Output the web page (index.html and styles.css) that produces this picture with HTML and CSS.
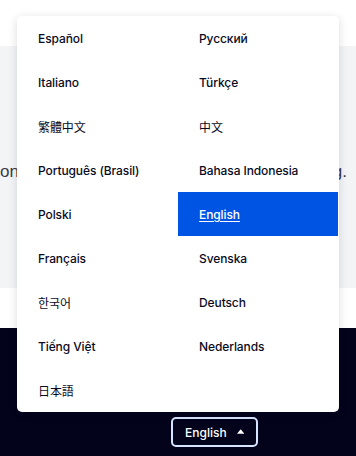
FILE: index.html
```html
<!DOCTYPE html>
<html lang="en">
<head>
<meta charset="utf-8">
<title>Language picker</title>
<link rel="stylesheet" href="styles.css">
</head>
<body>
<div class="top"></div>
<section class="band">
  <p class="notice"><span>on</span><span>g.</span></p>
</section>
<div class="gap"></div>
<footer class="footer">
  <div class="picker">
    <ul class="menu">
      <li class="item"><a href="#">Español</a></li>
      <li class="item"><a href="#">Русский</a></li>
      <li class="item"><a href="#">Italiano</a></li>
      <li class="item"><a href="#">Türkçe</a></li>
      <li class="item cjk"><a href="#" lang="zh-Hant">繁體中文</a></li>
      <li class="item cjk"><a href="#" lang="zh-Hans">中文</a></li>
      <li class="item"><a href="#">Português (Brasil)</a></li>
      <li class="item"><a href="#">Bahasa Indonesia</a></li>
      <li class="item"><a href="#">Polski</a></li>
      <li class="item active"><a href="#">English</a></li>
      <li class="item"><a href="#">Français</a></li>
      <li class="item"><a href="#">Svenska</a></li>
      <li class="item cjk"><a href="#" lang="ko">한국어</a></li>
      <li class="item"><a href="#">Deutsch</a></li>
      <li class="item"><a href="#">Tiếng Việt</a></li>
      <li class="item"><a href="#">Nederlands</a></li>
      <li class="item cjk"><a href="#" lang="ja">日本語</a></li>
    </ul>
    <button class="toggle" type="button">English <svg class="caret" width="8" height="5" viewBox="0 0 8 5"><path d="M0 5 L4 0 L8 5 Z" fill="#fff"/></svg></button>
  </div>
</footer>
</body>
</html>
```

FILE: styles.css
```css
* { box-sizing: border-box; }
html, body { margin: 0; padding: 0; }
body {
  width: 356px;
  height: 456px;
  overflow: hidden;
  font-family: "Inter", "Liberation Sans", sans-serif;
  color: #0a0b1e;
  background: #fff;
}
.top { height: 46px; background: #fff; }
.band {
  height: 242px;
  background: #f3f4f6;
  padding-top: 114px;
}
.notice {
  margin: 0;
  padding: 0 9px 0 0;
  display: flex;
  justify-content: space-between;
  font-family: "Liberation Sans", sans-serif;
  font-size: 17px;
  line-height: 24px;
  color: #3a3b48;
  white-space: nowrap;
}
.gap { height: 40px; background: #fff; }
.footer {
  height: 128px;
  background: #03031b;
  padding-top: 89px;
  padding-left: 171px;
}
.picker { position: relative; width: 87px; }
.toggle {
  display: flex;
  align-items: center;
  gap: 10px;
  width: 87px;
  height: 30px;
  padding: 0 12px 0 12px;
  border: 2px solid #d6e4ff;
  border-radius: 5px;
  background: transparent;
  color: #fff;
  font-family: "Inter", "Liberation Sans", sans-serif;
  font-size: 12px;
  font-weight: 500;
}
.caret { display: block; margin-top: -1px; }
.menu {
  position: absolute;
  left: -154px;
  bottom: 35px;
  width: 322px;
  margin: 0;
  padding: 0;
  list-style: none;
  display: grid;
  grid-template-columns: 161px 161px;
  background: #fff;
  border-radius: 5px;
  box-shadow: 0 2px 10px rgba(10, 12, 40, 0.14);
}
.item { height: 44px; display: flex; align-items: center; padding-left: 21px; }
.item a {
  color: #0a0b1e;
  text-decoration: none;
  font-size: 12px;
  font-weight: 500;
  letter-spacing: -0.1px;
}
.cjk a { font-family: "Noto Sans CJK SC", "Noto Sans CJK JP", sans-serif; font-weight: 400; font-size: 12px; }
.active { background: #0054e3; margin-right: 1px; }
.active a { color: #fff; text-decoration: underline; text-underline-offset: 2px; }
```
